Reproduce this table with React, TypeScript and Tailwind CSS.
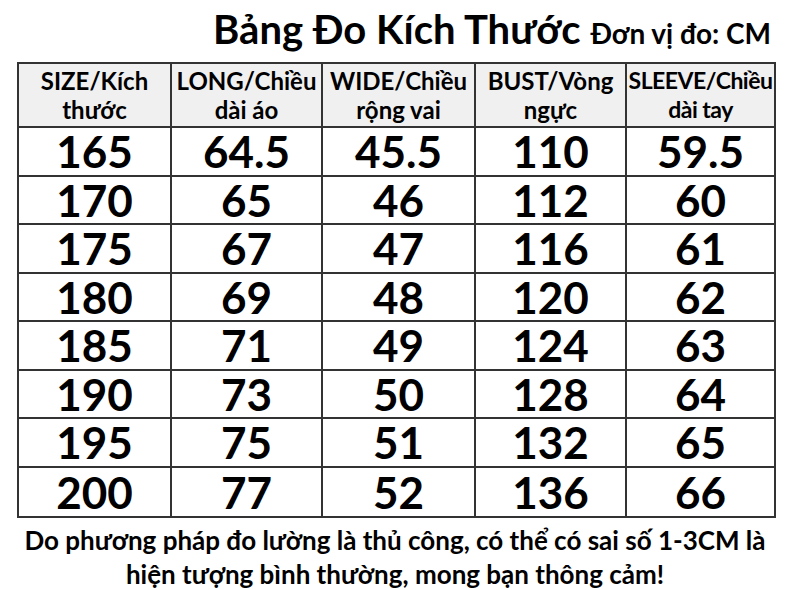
const HEADERS = [
  ['SIZE/Kích', 'thước'],
  ['LONG/Chiều', 'dài áo'],
  ['WIDE/Chiều', 'rộng vai'],
  ['BUST/Vòng', 'ngực'],
  ['SLEEVE/Chiều', 'dài tay'],
]

const ROWS = [
  ['165', '64.5', '45.5', '110', '59.5'],
  ['170', '65', '46', '112', '60'],
  ['175', '67', '47', '116', '61'],
  ['180', '69', '48', '120', '62'],
  ['185', '71', '49', '124', '63'],
  ['190', '73', '50', '128', '64'],
  ['195', '75', '51', '132', '65'],
  ['200', '77', '52', '136', '66'],
]

export default function App() {
  return (
    <div
      className="w-[790px] h-[590px] bg-white text-black overflow-hidden"
      style={{ fontFamily: 'Lato, "Noto Sans", sans-serif' }}
    >
      <div className="flex items-baseline justify-end pr-[19px] pt-[6px] h-[62px]">
        <h1 className="text-[40px] font-bold leading-[46px]">Bảng Đo Kích Thước</h1>
        <span className="ml-[10px] text-[28px] font-bold">Đơn vị đo: CM</span>
      </div>
      <div className="ml-[17px] w-[759px] border-2 border-[#333] grid grid-cols-[153px_151px_153px_151px_1fr]">
        {HEADERS.map(([a, b], i) => (
          <div
            key={a}
            className={`h-[64px] bg-[#f0f0f0] flex flex-col items-center justify-center font-bold leading-[29px] whitespace-nowrap border-b-2 border-[#333] ${i < 4 ? 'border-r-2 text-[24px]' : 'text-[23px] tracking-[-0.5px]'}`}
          >
            <span>{a}</span>
            <span>{b}</span>
          </div>
        ))}
        {ROWS.map((row, r) =>
          row.map((v, i) => (
            <div
              key={`${r}-${i}`}
              className={`h-[48.5px] flex items-center justify-center text-[44px] font-bold leading-none border-[#333] ${i < 4 ? 'border-r-2' : ''} ${r < 7 ? 'border-b-2' : ''}`}
            >
              {v}
            </div>
          ))
        )}
      </div>
      <div className="mt-[5px] text-center text-[26px] font-bold leading-[34px]">
        <p>Do phương pháp đo lường là thủ công, có thể có sai số 1-3CM là</p>
        <p>hiện tượng bình thường, mong bạn thông cảm!</p>
      </div>
    </div>
  )
}
